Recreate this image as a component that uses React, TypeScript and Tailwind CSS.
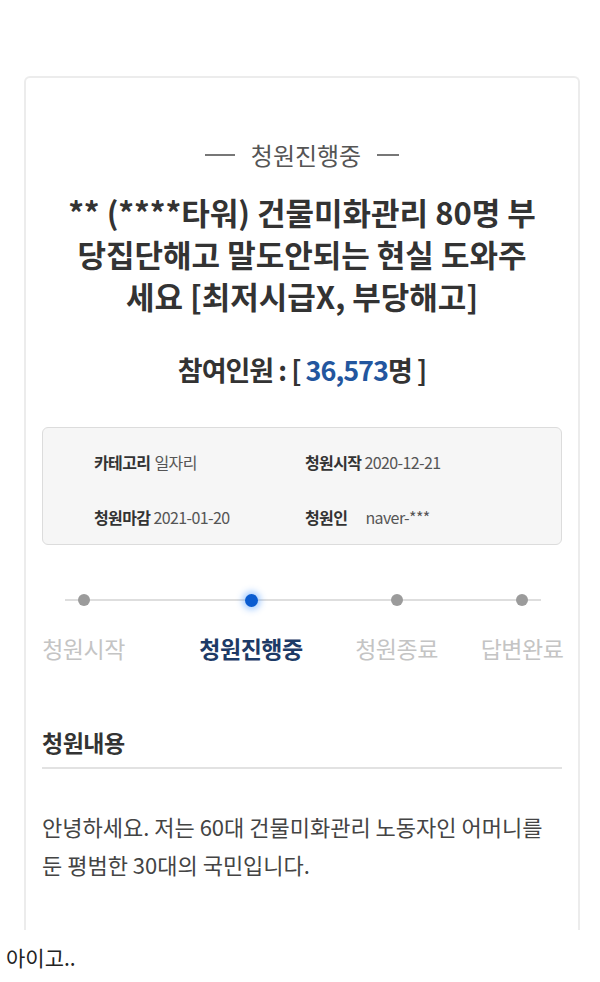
import React from 'react'

const steps = [
  { label: '청원시작', width: 'w-[83px]', gap: 'ml-0', active: false },
  { label: '청원진행중', width: 'w-[102px]', gap: 'ml-[75px]', active: true },
  { label: '청원종료', width: 'w-[83px]', gap: 'ml-[53px]', active: false },
  { label: '답변완료', width: 'w-[80px]', gap: 'ml-[44px]', active: false },
]

function InfoBox() {
  return (
    <div className="mt-[39px] rounded-md border border-[#dcdcdc] bg-[#f6f6f6] pl-[51px] pt-[22px] pb-[15px] text-[16px] leading-[24px] tracking-[-0.6px]">
      <div className="grid grid-cols-[211px_1fr] gap-y-[31px]">
        <div>
          <span className="font-bold text-[#333]">카테고리</span>
          <span className="ml-[4px] text-[#555]">일자리</span>
        </div>
        <div>
          <span className="font-bold text-[#333]">청원시작</span>
          <span className="ml-[3px] text-[#555]">2020-12-21</span>
        </div>
        <div>
          <span className="font-bold text-[#333]">청원마감</span>
          <span className="ml-[3px] text-[#555]">2021-01-20</span>
        </div>
        <div>
          <span className="font-bold text-[#333]">청원인</span>
          <span className="ml-[18px] text-[#555]">naver-***</span>
        </div>
      </div>
    </div>
  )
}

function Progress() {
  return (
    <div className="relative mt-[48px]">
      {/* track behind the dots */}
      <div className="absolute left-[23px] right-[21px] top-[6px] h-[2px] bg-[#dedede]" />
      <div className="relative flex">
        {steps.map((s) => (
          <div key={s.label} className={`${s.gap} ${s.width} flex flex-col items-center`}>
            <div className="flex h-[14px] items-center">
              {s.active ? (
                <span className="block h-[13px] w-[13px] rounded-full bg-[#0b5cd0] shadow-[0_0_6px_3px_rgba(70,150,255,0.45)]" />
              ) : (
                <span className="block h-[12px] w-[12px] rounded-full bg-[#9b9b9b]" />
              )}
            </div>
            <span
              className={
                s.active
                  ? 'mt-[27px] whitespace-nowrap text-[23px] font-bold leading-[28px] tracking-[-0.5px] text-[#1d3a66]'
                  : 'mt-[27px] whitespace-nowrap text-[23px] leading-[28px] tracking-[-0.5px] text-[#c4c4c4]'
              }
            >
              {s.label}
            </span>
          </div>
        ))}
      </div>
    </div>
  )
}

export default function App() {
  return (
    <div className="h-[982px] w-[600px] overflow-hidden bg-white font-['Noto_Sans_CJK_KR',sans-serif]">
      <div className="px-[20px] pt-[76px]">
        <div className="ml-[4px] h-[854px] overflow-hidden rounded-t-[6px] border-2 border-b-0 border-[#ececec]">
          <div className="px-4 pt-[62px]">
            {/* status */}
            <div className="flex items-center justify-center gap-[16px] text-[24px] leading-[30px] text-[#555]">
              <span className="block h-[2px] w-[30px] bg-[#777]" />
              <span>청원진행중</span>
              <span className="block h-[2px] w-[22px] bg-[#777]" />
            </div>

            {/* title */}
            <h1 className="mt-[21px] text-center text-[31px] font-bold leading-[42px] text-[#333]">
              ** (****타워) 건물미화관리 80명 부<br />
              당집단해고 말도안되는 현실 도와주<br />
              세요 [최저시급X, 부당해고]
            </h1>

            {/* participants */}
            <p className="mt-[35px] text-center text-[27px] font-bold leading-[36px] tracking-[-1px] text-[#333]">
              참여인원 : [ <span className="text-[#23569e]">36,573</span>명 ]
            </p>

            <InfoBox />

            <Progress />

            {/* body */}
            <h2 className="mt-[66px] border-b-2 border-[#e2e2e2] pb-[11px] text-[23px] font-bold leading-[28px] tracking-[-0.5px] text-[#333]">
              청원내용
            </h2>
            <p className="mt-[38px] text-[22px] leading-[38px] text-[#444]">
              안녕하세요. 저는 60대 건물미화관리 노동자인 어머니를
              <br />둔 평범한 30대의 국민입니다.
            </p>
          </div>
        </div>
      </div>
      <p className="mt-[13px] pl-[6px] text-[21px] leading-[28px] text-[#222]">아이고..</p>
    </div>
  )
}
